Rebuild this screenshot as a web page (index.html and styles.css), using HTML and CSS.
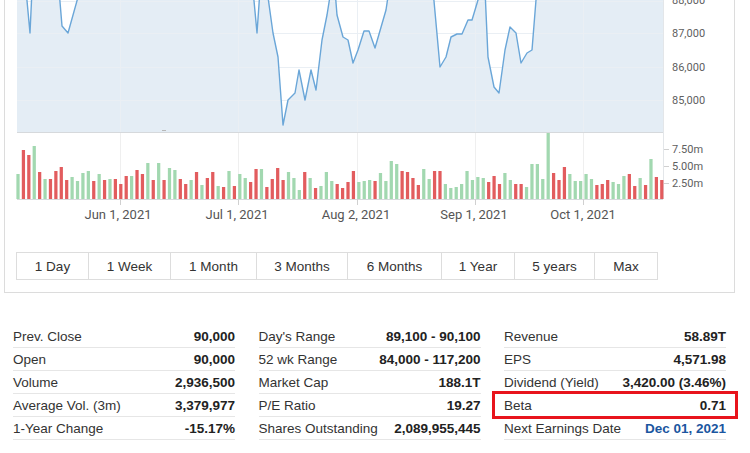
FILE: index.html
```html
<!DOCTYPE html>
<html>
<head>
<meta charset="utf-8">
<link rel="stylesheet" href="styles.css">
</head>
<body>
<div class="chart-panel">
  <svg class="chart" width="729" height="226" viewBox="5 0 729 226">
    <defs>
      <clipPath id="plot"><rect x="17" y="0" width="646" height="132"/></clipPath>
    </defs>
    <g clip-path="url(#plot)">
      <path class="area" d="M17,-10 L26,-10 L30,33 L32,-10 L59,-10 L62,26 L68,33 L80,-10 L253,-10 L257,33 L260,-10 L267,-10 L273,33 L278,57 L283,125 L288,100 L295,93 L299,70 L305,100 L311,70 L316,90 L322,40 L327,15 L331,-10 L335,-10 L337,15 L343,37 L348,40 L353,63 L358,50 L364,31 L369,31 L375,48 L386,10 L389,-10 L433,-10 L440,67 L446,57 L451,37 L457,34 L462,34 L468,20 L472,20 L478,0 L480,-10 L485,-10 L488,57 L494,87 L499,93 L505,50 L510,27 L516,33 L521,63 L527,53 L532,50 L536,0 L538,-10 L663,-10 L663,132 L17,132 Z"/>
      <g class="grid">
        <line x1="17" y1="1.5" x2="663" y2="1.5"/>
        <line x1="17" y1="33.5" x2="663" y2="33.5"/>
        <line x1="17" y1="67.5" x2="663" y2="67.5"/>
        <line x1="17" y1="100.5" x2="663" y2="100.5"/>
        <line x1="120.5" y1="0" x2="120.5" y2="132"/>
        <line x1="238.5" y1="0" x2="238.5" y2="132"/>
        <line x1="357.5" y1="0" x2="357.5" y2="132"/>
        <line x1="475.5" y1="0" x2="475.5" y2="132"/>
        <line x1="583.5" y1="0" x2="583.5" y2="132"/>
      </g>
      <path class="line" d="M17,-10 L26,-10 L30,33 L32,-10 L59,-10 L62,26 L68,33 L80,-10 L253,-10 L257,33 L260,-10 L267,-10 L273,33 L278,57 L283,125 L288,100 L295,93 L299,70 L305,100 L311,70 L316,90 L322,40 L327,15 L331,-10 L335,-10 L337,15 L343,37 L348,40 L353,63 L358,50 L364,31 L369,31 L375,48 L386,10 L389,-10 L433,-10 L440,67 L446,57 L451,37 L457,34 L462,34 L468,20 L472,20 L478,0 L480,-10 L485,-10 L488,57 L494,87 L499,93 L505,50 L510,27 L516,33 L521,63 L527,53 L532,50 L536,0 L538,-10 L663,-10"/>
      <line class="nav-mark" x1="162" y1="130.5" x2="166" y2="130.5"/>
    </g>
    <g class="vgrid">
      <line x1="120.5" y1="133" x2="120.5" y2="199"/>
      <line x1="238.5" y1="133" x2="238.5" y2="199"/>
      <line x1="357.5" y1="133" x2="357.5" y2="199"/>
      <line x1="475.5" y1="133" x2="475.5" y2="199"/>
      <line x1="583.5" y1="133" x2="583.5" y2="199"/>
    </g>
    <line class="axis-line" x1="17" y1="132.5" x2="663" y2="132.5"/>
    <line class="axis-right" x1="663.5" y1="0" x2="663.5" y2="199"/>
    <svg class="bars" x="15.3" y="133" width="649.2" height="66" viewBox="0 0 120 66" preserveAspectRatio="none">
      <rect class="g" x="0.2" y="41" width="0.6" height="25"/>
      <rect class="r" x="1.2" y="17" width="0.6" height="49"/>
      <rect class="r" x="2.2" y="22" width="0.6" height="44"/>
      <rect class="g" x="3.2" y="13" width="0.6" height="53"/>
      <rect class="r" x="4.2" y="39" width="0.6" height="27"/>
      <rect class="g" x="5.2" y="46" width="0.6" height="20"/>
      <rect class="r" x="6.2" y="46" width="0.6" height="20"/>
      <rect class="r" x="7.2" y="38" width="0.6" height="28"/>
      <rect class="r" x="8.2" y="34" width="0.6" height="32"/>
      <rect class="r" x="9.2" y="47" width="0.6" height="19"/>
      <rect class="g" x="10.2" y="44" width="0.6" height="22"/>
      <rect class="g" x="11.2" y="48" width="0.6" height="18"/>
      <rect class="g" x="12.2" y="40" width="0.6" height="26"/>
      <rect class="g" x="13.2" y="38" width="0.6" height="28"/>
      <rect class="r" x="14.2" y="48" width="0.6" height="18"/>
      <rect class="g" x="15.2" y="41" width="0.6" height="25"/>
      <rect class="r" x="16.2" y="47" width="0.6" height="19"/>
      <rect class="g" x="17.2" y="46" width="0.6" height="20"/>
      <rect class="r" x="18.2" y="46" width="0.6" height="20"/>
      <rect class="r" x="19.2" y="51" width="0.6" height="15"/>
      <rect class="r" x="20.2" y="43" width="0.6" height="23"/>
      <rect class="g" x="21.2" y="43" width="0.6" height="23"/>
      <rect class="r" x="22.2" y="37" width="0.6" height="29"/>
      <rect class="r" x="23.2" y="41" width="0.6" height="25"/>
      <rect class="g" x="24.2" y="30" width="0.6" height="36"/>
      <rect class="r" x="25.2" y="47" width="0.6" height="19"/>
      <rect class="g" x="26.2" y="30" width="0.6" height="36"/>
      <rect class="r" x="27.2" y="47" width="0.6" height="19"/>
      <rect class="g" x="28.2" y="35" width="0.6" height="31"/>
      <rect class="g" x="29.2" y="37" width="0.6" height="29"/>
      <rect class="r" x="30.2" y="46" width="0.6" height="20"/>
      <rect class="r" x="31.2" y="51" width="0.6" height="15"/>
      <rect class="g" x="32.2" y="47" width="0.6" height="19"/>
      <rect class="r" x="33.2" y="39" width="0.6" height="27"/>
      <rect class="g" x="34.2" y="52" width="0.6" height="14"/>
      <rect class="r" x="35.2" y="45" width="0.6" height="21"/>
      <rect class="r" x="36.2" y="39" width="0.6" height="27"/>
      <rect class="g" x="37.2" y="53" width="0.6" height="13"/>
      <rect class="r" x="38.2" y="54" width="0.6" height="12"/>
      <rect class="g" x="39.2" y="38" width="0.6" height="28"/>
      <rect class="r" x="40.2" y="53" width="0.6" height="13"/>
      <rect class="g" x="41.2" y="41" width="0.6" height="25"/>
      <rect class="g" x="42.2" y="45" width="0.6" height="21"/>
      <rect class="r" x="43.2" y="49" width="0.6" height="17"/>
      <rect class="r" x="44.2" y="36" width="0.6" height="30"/>
      <rect class="g" x="45.2" y="36" width="0.6" height="30"/>
      <rect class="r" x="46.2" y="54" width="0.6" height="12"/>
      <rect class="r" x="47.2" y="46" width="0.6" height="20"/>
      <rect class="r" x="48.2" y="35" width="0.6" height="31"/>
      <rect class="r" x="49.2" y="47" width="0.6" height="19"/>
      <rect class="g" x="50.2" y="39" width="0.6" height="27"/>
      <rect class="g" x="51.2" y="45" width="0.6" height="21"/>
      <rect class="g" x="52.2" y="57" width="0.6" height="9"/>
      <rect class="r" x="53.2" y="39" width="0.6" height="27"/>
      <rect class="g" x="54.2" y="45" width="0.6" height="21"/>
      <rect class="r" x="55.2" y="55" width="0.6" height="11"/>
      <rect class="g" x="56.2" y="53" width="0.6" height="13"/>
      <rect class="g" x="57.2" y="39" width="0.6" height="27"/>
      <rect class="g" x="58.2" y="48" width="0.6" height="18"/>
      <rect class="r" x="59.2" y="51" width="0.6" height="15"/>
      <rect class="r" x="60.2" y="55" width="0.6" height="11"/>
      <rect class="r" x="61.2" y="49" width="0.6" height="17"/>
      <rect class="r" x="62.2" y="38" width="0.6" height="28"/>
      <rect class="g" x="63.2" y="49" width="0.6" height="17"/>
      <rect class="g" x="64.2" y="48" width="0.6" height="18"/>
      <rect class="g" x="65.2" y="47" width="0.6" height="19"/>
      <rect class="r" x="66.2" y="48" width="0.6" height="18"/>
      <rect class="g" x="67.2" y="40" width="0.6" height="26"/>
      <rect class="g" x="68.2" y="48" width="0.6" height="18"/>
      <rect class="g" x="69.2" y="28" width="0.6" height="38"/>
      <rect class="g" x="70.2" y="31" width="0.6" height="35"/>
      <rect class="r" x="71.2" y="38" width="0.6" height="28"/>
      <rect class="r" x="72.2" y="39" width="0.6" height="27"/>
      <rect class="r" x="73.2" y="45" width="0.6" height="21"/>
      <rect class="r" x="74.2" y="52" width="0.6" height="14"/>
      <rect class="g" x="75.2" y="36" width="0.6" height="30"/>
      <rect class="g" x="76.2" y="46" width="0.6" height="20"/>
      <rect class="r" x="77.2" y="38" width="0.6" height="28"/>
      <rect class="r" x="78.2" y="38" width="0.6" height="28"/>
      <rect class="g" x="79.2" y="51" width="0.6" height="15"/>
      <rect class="g" x="80.2" y="55" width="0.6" height="11"/>
      <rect class="g" x="81.2" y="54" width="0.6" height="12"/>
      <rect class="g" x="82.2" y="51" width="0.6" height="15"/>
      <rect class="g" x="83.2" y="38" width="0.6" height="28"/>
      <rect class="g" x="84.2" y="47" width="0.6" height="19"/>
      <rect class="g" x="85.2" y="44" width="0.6" height="22"/>
      <rect class="g" x="86.2" y="45" width="0.6" height="21"/>
      <rect class="r" x="87.2" y="49" width="0.6" height="17"/>
      <rect class="r" x="88.2" y="43" width="0.6" height="23"/>
      <rect class="r" x="89.2" y="51" width="0.6" height="15"/>
      <rect class="g" x="90.2" y="40" width="0.6" height="26"/>
      <rect class="g" x="91.2" y="47" width="0.6" height="19"/>
      <rect class="r" x="92.2" y="51" width="0.6" height="15"/>
      <rect class="r" x="93.2" y="51" width="0.6" height="15"/>
      <rect class="g" x="94.2" y="54" width="0.6" height="12"/>
      <rect class="g" x="95.2" y="31" width="0.6" height="35"/>
      <rect class="g" x="96.2" y="31" width="0.6" height="35"/>
      <rect class="g" x="97.2" y="46" width="0.6" height="20"/>
      <rect class="g" x="98.2" y="0" width="0.6" height="66"/>
      <rect class="r" x="99.2" y="40" width="0.6" height="26"/>
      <rect class="r" x="100.2" y="47" width="0.6" height="19"/>
      <rect class="r" x="101.2" y="34" width="0.6" height="32"/>
      <rect class="g" x="102.2" y="41" width="0.6" height="25"/>
      <rect class="g" x="103.2" y="48" width="0.6" height="18"/>
      <rect class="g" x="104.2" y="48" width="0.6" height="18"/>
      <rect class="g" x="105.2" y="41" width="0.6" height="25"/>
      <rect class="g" x="106.2" y="46" width="0.6" height="20"/>
      <rect class="r" x="107.2" y="52" width="0.6" height="14"/>
      <rect class="r" x="108.2" y="51" width="0.6" height="15"/>
      <rect class="r" x="109.2" y="47" width="0.6" height="19"/>
      <rect class="g" x="110.2" y="49" width="0.6" height="17"/>
      <rect class="g" x="111.2" y="51" width="0.6" height="15"/>
      <rect class="g" x="112.2" y="43" width="0.6" height="23"/>
      <rect class="r" x="113.2" y="41" width="0.6" height="25"/>
      <rect class="r" x="114.2" y="53" width="0.6" height="13"/>
      <rect class="g" x="115.2" y="45" width="0.6" height="21"/>
      <rect class="r" x="116.2" y="52" width="0.6" height="14"/>
      <rect class="g" x="117.2" y="26" width="0.6" height="40"/>
      <rect class="r" x="118.2" y="44" width="0.6" height="22"/>
      <rect class="r" x="119.2" y="47" width="0.6" height="19"/>
    </svg>
    <line class="axis-line" x1="17" y1="199.5" x2="663" y2="199.5"/>
    <g class="ticks">
      <line x1="120.5" y1="199" x2="120.5" y2="205"/>
      <line x1="238.5" y1="199" x2="238.5" y2="205"/>
      <line x1="357.5" y1="199" x2="357.5" y2="205"/>
      <line x1="475.5" y1="199" x2="475.5" y2="205"/>
      <line x1="583.5" y1="199" x2="583.5" y2="205"/>
      <line x1="664" y1="149.5" x2="669" y2="149.5"/>
      <line x1="664" y1="166.5" x2="669" y2="166.5"/>
      <line x1="664" y1="183.5" x2="669" y2="183.5"/>
    </g>
    <g class="ylabels">
      <text x="672" y="4">88,000</text>
      <text x="672" y="37">87,000</text>
      <text x="672" y="71">86,000</text>
      <text x="672" y="104">85,000</text>
      <text x="672" y="153">7.50m</text>
      <text x="672" y="170">5.00m</text>
      <text x="672" y="187">2.50m</text>
    </g>
    <g class="xlabels">
      <text x="118" y="219">Jun 1, 2021</text>
      <text x="237" y="219">Jul 1, 2021</text>
      <text x="356" y="219">Aug 2, 2021</text>
      <text x="474" y="219">Sep 1, 2021</text>
      <text x="583" y="219">Oct 1, 2021</text>
    </g>
  </svg>
  <div class="ranges">
    <div class="range w72">1 Day</div>
    <div class="range w82">1 Week</div>
    <div class="range w86">1 Month</div>
    <div class="range w91">3 Months</div>
    <div class="range w94">6 Months</div>
    <div class="range w73">1 Year</div>
    <div class="range w80">5 years</div>
    <div class="range w63 last">Max</div>
  </div>
</div>

<div class="stats">
  <div class="col">
    <div class="row"><span class="label">Prev. Close</span><span class="value">90,000</span></div>
    <div class="row"><span class="label">Open</span><span class="value">90,000</span></div>
    <div class="row"><span class="label">Volume</span><span class="value">2,936,500</span></div>
    <div class="row"><span class="label">Average Vol. (3m)</span><span class="value">3,379,977</span></div>
    <div class="row"><span class="label">1-Year Change</span><span class="value">-15.17%</span></div>
  </div>
  <div class="col">
    <div class="row"><span class="label">Day's Range</span><span class="value">89,100 - 90,100</span></div>
    <div class="row"><span class="label">52 wk Range</span><span class="value">84,000 - 117,200</span></div>
    <div class="row"><span class="label">Market Cap</span><span class="value">188.1T</span></div>
    <div class="row"><span class="label">P/E Ratio</span><span class="value">19.27</span></div>
    <div class="row"><span class="label">Shares Outstanding</span><span class="value">2,089,955,445</span></div>
  </div>
  <div class="col">
    <div class="row"><span class="label">Revenue</span><span class="value">58.89T</span></div>
    <div class="row"><span class="label">EPS</span><span class="value">4,571.98</span></div>
    <div class="row"><span class="label">Dividend (Yield)</span><span class="value">3,420.00 (3.46%)</span></div>
    <div class="row highlight"><span class="label">Beta</span><span class="value">0.71</span></div>
    <div class="row"><span class="label">Next Earnings Date</span><span class="value link">Dec 01, 2021</span></div>
  </div>
</div>
</body>
</html>
```

FILE: styles.css
```css
html, body {
  margin: 0;
  padding: 0;
  background: #ffffff;
}

body {
  font-family: "Liberation Sans", Arial, sans-serif;
  color: #333333;
  width: 750px;
  height: 453px;
  overflow: hidden;
}

.chart-panel {
  margin-left: 4px;
  width: 729px;
  border-left: 1px solid #dcdcdc;
  border-right: 1px solid #dcdcdc;
  border-bottom: 1px solid #dcdcdc;
  padding-bottom: 12px;
}

.chart {
  display: block;
}

.area {
  fill: #e4edf5;
}

.line {
  fill: none;
  stroke: #6aa6d8;
  stroke-width: 1.4;
  stroke-linejoin: round;
}

.grid line {
  stroke: #eaeff4;
  stroke-width: 1;
}

.vgrid line {
  stroke: #efefef;
  stroke-width: 1;
}

.nav-mark {
  stroke: #b8b8b8;
  stroke-width: 1;
}

.axis-line {
  stroke: #d6d9dc;
  stroke-width: 1;
}

.axis-right {
  stroke: #e3e6e9;
  stroke-width: 1;
}

.ticks line {
  stroke: #d0d0d0;
  stroke-width: 1;
}

.bars .g {
  fill: #a2d8b0;
}

.bars .r {
  fill: #e25c5e;
}

.ylabels text {
  font-family: Roboto, "Liberation Sans", sans-serif;
  font-size: 11px;
  fill: #606060;
}

.xlabels text {
  font-family: Roboto, "Liberation Sans", sans-serif;
  font-size: 13px;
  fill: #555555;
  text-anchor: middle;
}

.ranges {
  display: flex;
  margin-top: 26px;
  margin-left: 11px;
}

.range {
  box-sizing: border-box;
  height: 28px;
  line-height: 28px;
  border: 1px solid #dddddd;
  border-right: none;
  text-align: center;
  font-size: 13.5px;
  color: #333333;
}

.range.last {
  border-right: 1px solid #dddddd;
}

.w72 { width: 72px; }
.w82 { width: 82px; }
.w86 { width: 86px; }
.w91 { width: 91px; }
.w94 { width: 94px; }
.w73 { width: 73px; }
.w80 { width: 80px; }
.w63 { width: 64px; }

.stats {
  display: grid;
  grid-template-columns: 222px 222px 222px;
  column-gap: 23.5px;
  margin-top: 32px;
  padding-left: 13px;
}

.row {
  display: flex;
  justify-content: space-between;
  height: 22px;
  line-height: 24px;
  border-bottom: 1px solid #e6e6e6;
  font-size: 13.5px;
  white-space: nowrap;
}

.label {
  color: #333333;
}

.value {
  font-weight: bold;
  color: #222222;
}

.value.link {
  color: #1b56a0;
}

.highlight {
  position: relative;
}

.highlight::after {
  content: "";
  position: absolute;
  left: -12px;
  right: -12px;
  top: -3px;
  bottom: -3px;
  border: 3px solid #e8141c;
}
```
